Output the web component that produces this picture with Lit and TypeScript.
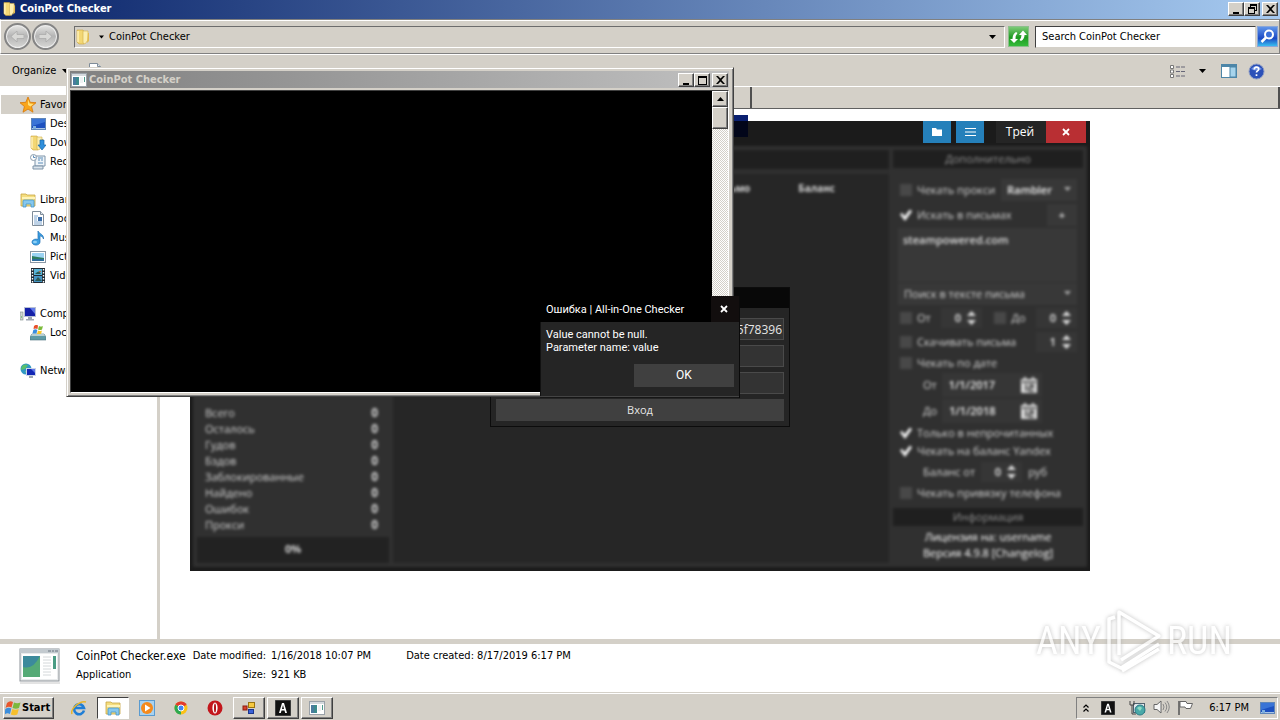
import { LitElement, html, css, svg } from "lit";
import { customElement, property } from "lit/decorators.js";

const icon = (w: number, h: number, body: unknown, vw = w, vh = h) =>
  html`<svg width=${w} height=${h} viewBox="0 0 ${vw} ${vh}" aria-hidden="true">${body}</svg>`;

const folder = svg`
  <path d="M1 1h6l1 2v12H3l-2-2z" fill="#f3d774" stroke="#c9a13c" stroke-width=".6"/>
  <path d="M7 2h5v9l-3 4-2-1z" fill="#fbeeb0" stroke="#d2ae4c" stroke-width=".6"/>
  <path d="M2 2v11" stroke="#fff3bd" stroke-width="1.4"/>
  <path d="M12 4h1v8l-2 2" fill="#e2bb50"/>`;
const appWindow = svg`
  <rect x=".5" y=".5" width="15" height="13" fill="#fff" stroke="#9aa1a8"/>
  <rect x="1" y="1" width="14" height="2" fill="#d5dade"/>
  <rect x="2" y="4" width="6" height="8" fill="#3c8a8c"/>
  <rect x="2" y="4" width="3" height="8" fill="#4a7c9e"/>
  <rect x="13" y="4" width="1" height="5" fill="#4e9c8c"/>
  <path d="M9 5h3M9 7h3M9 9h3" stroke="#e2e6e8"/>`;
const monitor = svg`
  <rect x="1" y="2" width="15" height="12" fill="#5f86b8"/>
  <rect x="2" y="3" width="13" height="9" fill="#1c50c0"/>
  <path d="M2 3h13v3L2 10z" fill="#3a74d6"/>
  <path d="M2 12.5h13" stroke="#a9c4e4"/><rect x="3" y="10" width="3" height="3" fill="#7dafdf"/>`;
const libraryFolder = svg`
  <path d="M1 2h5l1 1h8v11H1z" fill="#f4dd7e" stroke="#c8a644" stroke-width=".8"/>
  <path d="M2 6h13" stroke="#fff4b8" stroke-width="2"/>
  <path d="M3 15V9q0-1 1-1h9q1 0 1 1v6h-3v-3H6v3z" fill="#86c8ee" stroke="#4696c8" stroke-width=".8"/>`;
const icons: Record<string, unknown> = {
  star: svg`<path d="M8 0l2.200 5.300 5.800.4-4.400 3.800 1.400 5.700L8 12.100 3 15.200l1.400-5.700L0 5.700l5.800-.4z" fill="#f9a51b" stroke="#d87708" stroke-width=".8"/><path d="M8 2.500l1.600 4 4 .4-3.200 2.500L8 8z" fill="#ffe27a"/>`,
  desktop: monitor,
  downloads: svg`${folder}<path d="M10 5h4v5h2l-4 5-4-5h2z" fill="#2f8fdc" stroke="#1765a8" stroke-width=".7"/>`,
  recent: svg`<path d="M5 2h10v10H5z" fill="#eef4f9" stroke="#7c93a8"/><path d="M3 12h10v3H3z" fill="#dbe4ec" stroke="#7c93a8"/><circle cx="3.500" cy="3.500" r="3" fill="#fff" stroke="#8b9cab"/><path d="M3.500 1.500v2h2M8 4h5M8 6h2M11 6h2M8 9h5" stroke="#5b8cb8" fill="none"/>`,
  library: libraryFolder,
  document: svg`<path d="M2.500.5h8l3 3v11h-11z" fill="#fff" stroke="#7f8c99"/><path d="M10.500.5v3h3" fill="#dce4ec" stroke="#7f8c99"/><path d="M4 5h4M4 7h3M4 9h3M4 11h8M4 13h8" stroke="#7fa6cf"/><path d="M8 6h4v4H8z" fill="#3b6da8"/>`,
  music: svg`<path d="M8 1c1 3 6 3 5.500 8-.5-2-2-3-3.500-3.200V12a4 3 0 1 1-2-2.500z" fill="#3da0e2" stroke="#1b6fb4" stroke-width=".7"/><ellipse cx="5" cy="12" rx="2" ry="1.300" fill="#8fd0f5"/>`,
  picture: svg`<rect x=".5" y="2.500" width="15" height="11" fill="#fff" stroke="#8a97a4"/><rect x="2" y="4" width="12" height="8" fill="#9bd3f3"/><path d="M2 7q5 1 12 2v3H2z" fill="#2d7d60"/><path d="M2 10h12v2H2z" fill="#2c6c9c"/>`,
  video: svg`<rect x="1" y="0" width="14" height="15" fill="#1f2a33"/><rect x="4" y="1" width="8" height="6" fill="#58b3d6"/><rect x="4" y="8" width="8" height="6" fill="#4594c4"/><path d="M5 6q4-5 6 0zM5 13l3-4 4 4z" fill="#2c5a54"/><path d="M2.500 1v14M13.500 1v14" stroke="#fff" stroke-width="1.400" stroke-dasharray="1.500 1.500"/><path d="M9 3h2v1H9z" fill="#c8683c"/>`,
  computer: svg`<rect x="0" y="6" width="3" height="8" fill="#cfd6d2" stroke="#7c8a88" stroke-width=".6"/><path d="M1 11h1" stroke="#3cae3c"/><rect x="4" y="1" width="12" height="10" fill="#b6bfd4"/><rect x="5" y="2" width="10" height="8" fill="#1420a8"/><path d="M10 2h5v6z" fill="#5f78e8"/><path d="M8 11h4v2H8zM6 13h8v1.500H6z" fill="#9fa8b4"/>`,
  disk: svg`<path d="M2 9h12l2 3v3H0v-3z" fill="#5f9ba6" stroke="#4a717c" stroke-width=".6"/><path d="M2 9h12l1 2H1z" fill="#b9cfd2"/><path d="M4 1q2-2 4-.5L7.500 4q-2-1-4 0z" fill="#e8502a"/><path d="M9 1q2 1 4 0l-1 3.500q-2 1-4 0z" fill="#7cbb3a"/><path d="M3.300 5q2-1.500 4 0L6.500 8.500h-4z" fill="#3a8fe0"/><path d="M8 5.500q2 1 4 0L11 9H7z" fill="#f8c62c"/>`,
  network: svg`<circle cx="6" cy="6" r="5.500" fill="#3198c4"/><path d="M3 2q3-1 5 0L5 6 1 7q0-3 2-5z" fill="#59c06c"/><path d="M5 8l3 1-1 3z" fill="#7bd08a"/><rect x="6" y="5" width="10" height="8" fill="#cbd4e6"/><rect x="7" y="6" width="8" height="6" fill="#1226b4"/><path d="M11 6h4v4z" fill="#5f78e8"/><path d="M9 13h4v2H9z" fill="#9fa8b4"/>`,
};

const winFlag = svg`
  <path d="M2 3q3-3 6-1L6.500 7.500q-3-1.500-6 .5z" fill="#e8562c"/>
  <path d="M9 2.500q3 1.500 6.500 0L14 8q-3 1.500-6.500 0z" fill="#7cb83c"/>
  <path d="M.3 9q3-2 6-.5L5 14q-3-1.500-5.500.5z" fill="#3c8edc"/>
  <path d="M7.300 9q3 1.500 6.500 0l-1.500 5.500q-3 1.500-6.500 0z" fill="#f6bf2c"/>`;

const down = (cls = "") => html`<svg class=${cls} width="7" height="4" viewBox="0 0 7 4" aria-hidden="true"><path d="M0 0h7L3.500 4z" fill="currentColor"/></svg>`;

const base = css`
  *, *::before, *::after { box-sizing: border-box; }
  svg { display: block; flex: none; }
  button, input, select, textarea { font: inherit; color: inherit; margin: 0; padding: 0; border: 0; border-radius: 0; background: none; }
`;

const classicButton = css`
  .cap { display: grid; place-items: center; width: 16px; height: 14px; background: #d4d0c8; color: #000;
    border: 1px solid; border-color: #fff #404040 #404040 #fff; box-shadow: inset -1px -1px #808080; }
  .caps { display: flex; }
  .caps .cap:last-child { margin-left: 2px; }
`;

const capIcons: Record<string, unknown> = {
  Minimize: svg`<path d="M1 8h6v2H1z"/>`,
  Maximize: svg`<path d="M0 1h9v9H0zM1 3v6h7V3z" fill-rule="evenodd"/>`,
  Restore: svg`<path d="M2 0h7v7H7V6h1V2H3v1H2zM0 3h7v7H0zM1 5v4h5V5z" fill-rule="evenodd"/>`,
  Close: svg`<path d="M0 1h2l2.500 2.500L7 1h2L5.500 5 9 9H7L4.500 6.500 2 9H0l3.500-4z"/>`,
};

@customElement("caption-buttons")
class CaptionButtons extends LitElement {
  @property() middle = "Maximize";
  static styles = [base, classicButton];
  render() {
    return html`<div class="caps">${["Minimize", this.middle, "Close"].map(
      (n) => html`<button class="cap" aria-label=${n}>${icon(9, 10, capIcons[n])}</button>`)}</div>`;
  }
}

const groups = [
  [["star", "Favorites"], ["desktop", "Desktop"], ["downloads", "Downloads"], ["recent", "Recent Places"]],
  [["library", "Libraries"], ["document", "Documents"], ["music", "Music"], ["picture", "Pictures"], ["video", "Videos"]],
  [["computer", "Computer"], ["disk", "Local Disk (C:)"]],
  [["network", "Network"]],
];

@customElement("explorer-window")
class ExplorerWindow extends LitElement {
  static styles = [base, css`
    :host { display: flex; flex-direction: column; flex: 1; min-height: 0; background: #d4d0c8; }
    .title { display: flex; align-items: center; gap: 4px; height: 19px; padding: 0 2px 1px 3px; color: #fff; font-weight: bold;
      background: linear-gradient(90deg, #0a246a, #a6caf0); }
    .title span { flex: 1; }
    .nav { display: flex; align-items: center; height: 35px; padding: 0 1px 0 3px; border: 1px solid; border-color: #808080 #808080 #808080 #fff;
      box-shadow: inset 0 1px #fff; }
    .round { width: 27px; height: 27px; border-radius: 50%; border: 2px solid #858585; display: grid; place-items: center; margin-right: 1px;
      background: linear-gradient(#e8e8e6, #b4b4b4 48%, #d8d8d6); box-shadow: inset 0 0 0 1px #eee; }
    .address { display: flex; align-items: center; flex: 1; height: 22px; margin-left: 14px; padding: 0 8px 0 1px;
      border: 1px solid; border-color: #6c6c6c #fff #fff #6c6c6c; }
    .address span { flex: 1; padding-left: 5px; }
    .address .arr { width: 5px; margin-left: 9px; }
    .refresh { width: 21px; height: 21px; margin: 0 6px 0 3px; display: grid; place-items: center; border: 1px solid #8cbf8c; background: linear-gradient(#7cca76, #1f9a22 55%, #35bb3a); }
    .search { width: 221px; height: 22px; padding: 0 6px; background: #fff; border: 1px solid; border-color: #404040 #d4d0c8 #d4d0c8 #404040; }
    .search::placeholder { color: #000; opacity: 1; }
    .go { width: 21px; height: 21px; margin-left: 1px; display: grid; place-items: center; border: 1px solid #8aa6d8; background: linear-gradient(#5f94ea, #1b49c4 60%, #38bdf0); }
    .tools { display: flex; align-items: center; height: 32px; padding: 1px 15px 0 12px; border-top: 1px solid #fff; gap: 10px; }
    .tools button { display: flex; align-items: center; gap: 6px; }
    .tools .space { flex: 1; }
    .tools button span { padding-top: 4px; }
    .tools .open { margin-left: 8px; gap: 4px; }
    .tools .share { margin-left: 4px; }
    .tools .new { margin-left: 16px; }
    .tools .view { margin-right: 3px; }
    .body { display: flex; flex: 1; min-height: 0; background: #fff; }
    .side { width: 157px; padding-top: 9px; display: flex; flex-direction: column; gap: 19px; }
    .side a { display: flex; align-items: center; gap: 4px; height: 19px; padding-left: 30px; color: #000; text-decoration: none; white-space: nowrap; }
    .side a.head { padding-left: 20px; }
    .side a.on { background: #d4d0c8; margin-left: 1px; padding-left: 19px; }
    .split { width: 3px; background: #d4d0c8; }
    .main { flex: 1; }
    .cols { display: flex; height: 23px; background: #d4d0c8; border-top: 1px solid #fff; border-bottom: 1px solid #606060; }
    .cols i { flex: 1; border-right: 2px solid #505050; }
    .cols i:first-child { flex: none; width: 592px; }
    .details { display: grid; grid-template-columns: 52px max-content max-content max-content 1fr; align-content: center; column-gap: 5px; row-gap: 2px;
      height: 53px; padding: 1px 0 5px 19px; background: #fff; border-top: 5px solid #d4d0c8; line-height: 16px; }
    .details .big { grid-row: 1 / 3; }
    .name { font-size: 12px; padding-right: 2px; }
    .key { text-align: right; }
    .created { padding-left: 30px; }
  `];
  render() {
    return html`
      <header class="title">${icon(13, 16, folder, 14, 16)}<span>CoinPot Checker</span><caption-buttons middle="Restore"></caption-buttons></header>
      <nav class="nav">
        <button class="round" aria-label="Back">${icon(13, 11, svg`<path d="M6 0v3.500h7v4H6V11L0 5.500z" fill="#d8d8d6" stroke="#a8a8a8" stroke-width=".7"/>`)}</button>
        <button class="round" aria-label="Forward">${icon(13, 11, svg`<path d="M7 0v3.500H0v4h7V11l6-5.500z" fill="#d8d8d6" stroke="#a8a8a8" stroke-width=".7"/>`)}</button>
        <div class="address">${icon(14, 16, folder)}${down("arr")}<span>CoinPot Checker</span>${down()}</div>
        <button class="refresh" aria-label="Refresh">${icon(17, 15, svg`<path d="M0 5l4-4 4 4H5.500q0 4 2 6l-1.500 1Q2.500 10 2.500 5zM17 9l-4 4.500L9 9h2.500q0-3-2-5L11 3q3.500 2 3.500 6z" fill="#fff" transform="matrix(1 0 0 -1 0 15)"/>`)}</button>
        <input class="search" type="search" aria-label="Search" placeholder="Search CoinPot Checker">
        <button class="go" aria-label="Go">${icon(17, 17, svg`<circle cx="10" cy="6.500" r="4" fill="#3a6ed8" stroke="#fff" stroke-width="2"/><path d="M7 9.500L2.500 14" stroke="#fff" stroke-width="2.500"/>`)}</button>
      </nav>
      <div class="tools">
        <button>Organize ${down()}</button>
        <button class="open">${icon(14, 16, icons.document)}<span>Open</span></button>
        <button class="share"><span>Share with</span></button>
        <button class="new"><span>New folder</span></button>
        <span class="space"></span>
        <button class="view" aria-label="View">${icon(16, 13, svg`<path d="M.5.5h3v3h-3zM.5 5h3v3h-3zM.5 9.500h3v3h-3z" fill="#fff" stroke="#777"/><path d="M6 2h4M11 2h4M6 6.500h4M11 6.500h4M6 11h4M11 11h4" stroke="#667"/>`)}</button>
        <button aria-label="More">${down()}</button>
        <button aria-label="Preview pane">${icon(22, 14, svg`<rect x="5.500" y=".5" width="15" height="13" fill="#fff" stroke="#4d86a8"/><path d="M6 2h15" stroke="#4d86a8" stroke-width="2"/><rect x="14" y="3" width="6" height="10" fill="#a7d4ec" stroke="#4d86a8"/>`)}</button>
        <button aria-label="Help">${icon(17, 17, svg`<circle cx="8.500" cy="8.500" r="7.500" fill="#2b50b8" stroke="#8d9cc4"/><path d="M3 6q5-6 11 0-5 3-11 0z" fill="#6f92e2"/><path d="M6.300 6.500q0-2.300 2.200-2.300t2.200 1.900q0 1.300-1.300 1.900-.9.500-.9 1.500M8.500 11.300v1.800" fill="none" stroke="#fff" stroke-width="1.700"/>`)}</button>
      </div>
      <div class="body">
        <div class="side">${groups.map((g, n) => html`<div>${g.map(([i, t], k) =>
          html`<a href="#" class=${k ? "" : n ? "head" : "head on"}>${icon(16, 16, icons[i])}${t}</a>`)}</div>`)}</div>
        <div class="split"></div>
        <div class="main"><div class="cols"><i></i><i></i></div></div>
      </div>
      <footer class="details">
        <div class="big">${icon(42, 36, svg`<rect x="1" y="1" width="39" height="32" fill="#e9ebec" stroke="#8d9399"/><path d="M1 3h39" stroke="#c3cacf" stroke-width="4"/><path d="M29 3h3M33 3h2M36 3h3" stroke="#6a7480"/><rect x="3" y="6" width="35" height="25" fill="#fff"/><rect x="4" y="8" width="17" height="21" fill="#3c8a9c"/><path d="M4 29V19Q14 22 21 8v21z" fill="#55aa76"/><path d="M24 9h8M24 12h8M24 15h8M24 18h8M24 21h8M24 24h8M24 27h8" stroke="#d4d8da"/><rect x="34" y="8" width="3" height="13" fill="#4a9c84"/><path d="M1 35h40" stroke="#c8c8c8"/>`)}</div>
        <span class="name">CoinPot Checker.exe</span><span class="key">Date modified:</span><span>1/16/2018 10:07 PM</span><span class="created">Date created: 8/17/2019 6:17 PM</span>
        <span>Application</span><span class="key">Size:</span><span>921 KB</span>
      </footer>`;
  }
}

@customElement("console-window")
class ConsoleWindow extends LitElement {
  static styles = [base, classicButton, css`
    :host { display: flex; flex-direction: column; padding: 3px 4px 3px 3px; background: #d4d0c8; border: 1px solid; border-color: #d4d0c8 #404040 #404040 #d4d0c8;
      box-shadow: inset 1px 1px #fff, inset -1px -1px #808080; }
    .title { display: flex; align-items: center; gap: 2px; height: 17px; padding: 0 1px; color: #d4d0c8; font-weight: bold;
      background: linear-gradient(90deg, #808080, #c0c0c0); }
    .title span { flex: 1; }
    .view { flex: 1; display: flex; margin-top: 2px; border: 1px solid; border-color: #404040 #fff #fff #404040; }
    .screen { flex: 1; background: #000; }
    .bar { width: 16px; background: repeating-conic-gradient(#d4d0c8 0 25%, #fff 0 50%) 0 0 / 2px 2px; }
    .bar .cap { height: 16px; }
    .bar .thumb { height: 22px; }
  `];
  render() {
    return html`
      <header class="title">${icon(16, 14, appWindow)}<span>CoinPot Checker</span><caption-buttons></caption-buttons></header>
      <div class="view"><div class="screen"></div>
        <div class="bar"><button class="cap" aria-label="Scroll up">${icon(7, 4, svg`<path d="M0 4h7L3.500 0z"/>`)}</button><div class="cap thumb"></div></div>
      </div>`;
  }
}

const stats = ["Всего", "Осталось", "Гудов", "Бэдов", "Заблокированные", "Найдено", "Ошибок", "Прокси"];

@customElement("checker-window")
class CheckerWindow extends LitElement {
  static styles = [base, css`
    :host { display: flex; flex-direction: column; background: #1b1b1b; color: #d2d2d2; font: 11px/16px "Open Sans", "Noto Sans", sans-serif; }
    .title { display: flex; justify-content: flex-end; height: 22px; padding-right: 4px; }
    .title button { display: grid; place-items: center; }
    .blue { width: 28px; margin-right: 5px; background: #2580ba; }
    .tray { width: 50px; margin-left: 7px; padding-right: 2px; background: #252525; color: #fff; font-size: 12px; }
    .title .close { width: 40px; background: #b92f33; }
    .body { flex: 1; display: flex; gap: 4px; margin: 3px 3px 4px; padding: 4px; background: #303030; filter: blur(1.4px); }
    .left { width: 192px; display: flex; flex-direction: column; justify-content: flex-end; }
    .stats { margin: 0; padding: 0 11px 4px 8px; }
    .stats div { display: flex; justify-content: space-between; }
    .stats dd { margin: 0; font-weight: bold; font-size: 12px; }
    .percent { height: 26px; background: #222; text-align: center; font-weight: bold; line-height: 24px; }
    .mid { flex: 1; background: #262626; }
    .mid .band { height: 24px; background: #1f1f1f; border-bottom: 5px solid #2f2f2f; }
    .mid .heads { display: flex; justify-content: flex-end; gap: 48px; padding: 6px 54px 0 0; font-weight: bold; font-size: 10px; }
    .right { width: 190px; }
    .bar { height: 18px; background: #1f1f1f; text-align: center; color: #909090; line-height: 18px; }
    .form { padding: 10px 6px 6px 5px; }
    .row { display: flex; align-items: center; height: 24px; gap: 6px; }
    .row.s { height: 18px; }
    .row.t { height: 26px; }
    .row.in { padding-left: 25px; }
    .row.pair { gap: 0; justify-content: space-between; }
    .row label { display: flex; align-items: center; gap: 5px; white-space: nowrap; }
    .row .grow { flex: 1; }
    input[type="checkbox"] { appearance: none; width: 12px; height: 12px; margin-left: 2px; background: #484848; }
    input[type="checkbox"]:checked { background: #f4f4f4; clip-path: polygon(0 45%, 18% 32%, 38% 60%, 82% 5%, 100% 18%, 42% 100%); }
    .drop { position: relative; display: flex; background: #383838; }
    .drop svg { position: absolute; right: 6px; top: 8px; color: #aaa; }
    select { appearance: none; height: 22px; padding: 0 6px; width: 100%; }
    .row .host { width: 76px; color: #eee; font-weight: 600; margin-left: -10px; }
    .wide { width: 100%; }
    textarea { display: block; width: 100%; height: 54px; padding: 4px 5px; background: #383838; resize: none; color: #ddd; font-weight: 600; }
    .plus { width: 30px; height: 22px; background: #383838; font-weight: bold; }
    .num { display: flex; align-items: center; gap: 6px; background: #363636; height: 20px; padding-right: 6px; color: #eee; font-weight: 600; }
    .num input { width: 20px; text-align: right; }
    .date { display: flex; align-items: center; background: #363636; height: 24px; width: 100px; padding: 0 5px 0 7px; color: #eee; font-weight: 600; }
    .date input { flex: 1; min-width: 0; }
    .info { text-align: center; padding-top: 3px; color: #fff; }
    .info a { color: inherit; text-decoration: none; }
  `];
  check(text: string, on = false) {
    return html`<label><input type="checkbox" ?checked=${on}>${text}</label>`;
  }
  num(label: string, v: string) {
    return html`<span class="num"><input aria-label=${label} value=${v}>${icon(9, 14, svg`<path d="M0 5h9L4.500 0zM0 9h9l-4.500 5z" fill="#ddd"/>`)}</span>`;
  }
  date(label: string, v: string) {
    return html`<label>${label}<span class="date"><input value=${v}>${icon(16, 16, svg`<path d="M0 2h16v14H0zM3 0h2v3H3zM11 0h2v3h-2z" fill="#ddd"/><path d="M1 5h14M5 7v7M8 8h4v2.500H8V14h5" stroke="#333" stroke-width="1.500" fill="none"/>`)}</span></label>`;
  }
  render() {
    return html`
      <header class="title">
        <button class="blue" aria-label="Папка">${icon(10, 8, svg`<path d="M0 0h4l1 1.500h5V8H0z" fill="#fff"/>`)}</button>
        <button class="blue" aria-label="Меню">${icon(11, 8, svg`<path d="M0 .5h11M0 4h11M0 7.500h11" stroke="#fff"/>`)}</button>
        <button class="tray">Трей</button>
        <button class="close" aria-label="Закрыть">${icon(8, 8, svg`<path d="M1 1l6 6M7 1L1 7" stroke="#fff" stroke-width="1.800"/>`)}</button>
      </header>
      <div class="body">
        <section class="left">
          <dl class="stats">${stats.map((s) => html`<div><dt>${s}</dt><dd>0</dd></div>`)}</dl>
          <div class="percent">0%</div>
        </section>
        <section class="mid"><div class="band"></div><div class="heads"><span>Письмо</span><span>Баланс</span></div></section>
        <section class="right">
          <div class="bar">Дополнительно</div>
          <div class="form">
            <div class="row">${this.check("Чекать прокси")}<span class="grow"></span><span class="drop host"><select aria-label="Хост"><option>Rambler</option></select>${down()}</span></div>
            <div class="row t">${this.check("Искать в письмах", true)}<span class="grow"></span><button class="plus">+</button></div>
            <textarea aria-label="Запросы">steampowered.com</textarea>
            <div class="row"><span class="drop wide"><select aria-label="Режим"><option>Поиск в тексте письма</option></select>${down()}</span></div>
            <div class="row pair">${this.check("От")}${this.num("От", "0")}${this.check("До")}${this.num("До", "0")}</div>
            <div class="row">${this.check("Скачивать письма")}<span class="grow"></span>${this.num("Письма", "1")}</div>
            <div class="row s">${this.check("Чекать по дате")}</div>
            <div class="row t in">${this.date("От", "1/1/2017")}</div>
            <div class="row t in">${this.date("До", "1/1/2018")}</div>
            <div class="row s">${this.check("Только в непрочитанных", true)}</div>
            <div class="row s">${this.check("Чекать на баланс Yandex", true)}</div>
            <div class="row in">Баланс от ${this.num("Баланс от", "0")} руб</div>
            <div class="row s">${this.check("Чекать привязку телефона")}</div>
          </div>
          <div class="bar">Информация</div>
          <div class="info">Лицензия на: username<br>Версия 4.9.8 <a href="#">[Changelog]</a></div>
        </section>
      </div>`;
  }
}

@customElement("login-dialog")
class LoginDialog extends LitElement {
  static styles = [base, css`
    :host { display: block; background: #252525; border: 1px solid #0c0c0c; color: #e6e6e6; font: 12px/16px "Open Sans", "Noto Sans", sans-serif; }
    .title { height: 20px; background: #080808; }
    form { display: flex; flex-direction: column; gap: 5px; padding: 10px 5px 5px; }
    input { height: 22px; padding: 0 1px; text-align: right; background: #333; border: 1px solid #4a4a4a; }
    button { height: 22px; background: #404040; font-size: 11px; }
  `];
  render() {
    return html`<div class="title"></div>
      <form>
        <input aria-label="HWID" value="5f78396"><input aria-label="Логин"><input aria-label="Пароль" type="password">
        <button type="button">Вход</button>
      </form>`;
  }
}

@customElement("error-dialog")
class ErrorDialog extends LitElement {
  static styles = [base, css`
    :host { display: block; background: #252525; border-right: 1px solid #0a0a0a; color: #fff; font: 11px/13px Roboto, "Open Sans", sans-serif; }
    .title { display: flex; align-items: center; justify-content: space-between; height: 26px; padding-left: 6px; background: #000; }
    .close { display: grid; place-items: center; width: 28px; height: 26px; padding-right: 3px; background: #120e0e; }
    .body { padding: 6px 5px 9px; border-left: 1px solid #111; }
    p { margin: 0 0 10px; }
    .ok { display: block; width: 100px; height: 23px; margin-left: auto; background: #404040; font-size: 12px; }
    .foot { height: 2px; border-top: 1px solid #444; background: #161616; }
  `];
  render() {
    return html`
      <div class="title"><span>Ошибка | All-in-One Checker</span>
        <button class="close" aria-label="Закрыть">${icon(8, 8, svg`<path d="M1 1l6 6M7 1L1 7" stroke="#fff" stroke-width="1.800"/>`)}</button></div>
      <div class="body"><p>Value cannot be null.<br>Parameter name: value</p><button class="ok">OK</button></div>
      <div class="foot"></div>`;
  }
}

@customElement("task-bar")
class TaskBar extends LitElement {
  static styles = [base, css`
    :host { display: flex; align-items: center; height: 28px; padding: 2px 2px 0 3px; background: #d4d0c8; border-top: 1px solid #d4d0c8; box-shadow: inset 0 1px #fff; }
    button { display: grid; place-items: center; width: 32px; height: 22px; }
    .start { display: flex; align-items: center; gap: 1px; width: 51px; padding-left: 1px; font-weight: bold; margin-right: 9px; }
    .up { border: 1px solid; border-color: #fff #404040 #404040 #fff; box-shadow: inset -1px -1px #808080; }
    .down { border: 1px solid; border-color: #404040 #fff #fff #404040; background: #fff; }
    .quick { display: flex; gap: 2px; margin-right: 2px; }
    .open { display: flex; gap: 2px; }
    .tray { display: flex; align-items: center; height: 22px; margin-left: auto; padding: 0 2px 0 6px; border: 1px solid; border-color: #808080 #fff #fff #808080; }
    .more { margin-right: 12px; }
    .lang { margin-right: 14px; }
    .mid { display: flex; gap: 7px; margin-right: 15px; }
    time { margin-right: 10px; }
  `];
  letterA(s: number) {
    return icon(s, s, svg`<rect width="16" height="16" fill="#111" stroke="#666"/><path d="M4 13L7 3h2l3 10h-1.800l-.7-2.500h-3L5.800 13zM7 9h2L8 5z" fill="#fff"/>`, 16, 16);
  }
  render() {
    return html`
      <button class="start up">${icon(16, 16, winFlag)}Start</button>
      <div class="quick">
        <button aria-label="Internet Explorer">${icon(16, 16, svg`<path d="M13 10.500A5 5 0 1 1 13 8H4.500" fill="none" stroke="#1f7ed6" stroke-width="2.600"/><path d="M1 14C-1 9 9 0 15 2" fill="none" stroke="#e8b52c" stroke-width="1.500"/>`)}</button>
        <button class="down" aria-label="Explorer">${icon(17, 16, libraryFolder)}</button>
        <button aria-label="Media Player">${icon(16, 16, svg`<rect x=".5" y=".5" width="15" height="15" fill="#a8d2f0" stroke="#5a9bd0"/><circle cx="8" cy="8" r="6" fill="#f58a1c"/><path d="M6 4.500v7L11.500 8z" fill="#fff"/>`)}</button>
        <button aria-label="Chrome">${icon(16, 16, svg`<circle cx="8" cy="8" r="6.500" fill="#fbc116"/><path d="M8 8L2.400 4.700A6.500 6.500 0 0 1 13.600 4.700z" fill="#e33b2e"/><path d="M8 8L2.400 4.700A6.500 6.500 0 0 0 8 14.500z" fill="#2da94f"/><circle cx="8" cy="8" r="3" fill="#4285f4" stroke="#fff"/>`)}</button>
        <button aria-label="Opera">${icon(16, 16, svg`<circle cx="8" cy="8" r="7.500" fill="#c3161c"/><ellipse cx="8" cy="8" rx="2.600" ry="5.500" fill="#fff"/><ellipse cx="8" cy="8" rx="1" ry="4.500" fill="#b01016"/>`)}</button>
      </div>
      <div class="open">
        <button class="up" aria-label="Forms">${icon(14, 14, svg`<rect x="6.500" y="1.500" width="6" height="5" fill="#f6c940" stroke="#9a7410"/><rect x="1" y="5" width="4" height="4" fill="#d8402c" stroke="#8c1c10"/><rect x="6.500" y="8.500" width="5" height="4" fill="#3b62d8" stroke="#1b368c"/>`)}</button>
        <button class="up" aria-label="All-in-One Checker">${this.letterA(16)}</button>
        <button class="up" aria-label="Console">${icon(16, 14, appWindow)}</button>
      </div>
      <div class="tray">
        <span class="more">${icon(6, 8, svg`<path d="M.5 3.500L3 1l2.500 2.500M.5 7.500L3 5l2.500 2.500" fill="none" stroke="#000" stroke-width="1.200"/>`)}</span>
        <span class="lang">${this.letterA(14)}</span>
        <span class="mid">
          ${icon(17, 16, svg`<rect x="4.500" y="3.500" width="11" height="9" fill="#dfe6ea" stroke="#50616e"/><path d="M1 1v4h4V1M3 5v9h4" fill="none" stroke="#444"/><circle cx="11" cy="10" r="5" fill="#4aa9a8" stroke="#2c7c86"/><path d="M8 8q3-3 5 0l-2 3z" fill="#8edcc4"/>`)}
          ${icon(17, 14, svg`<path d="M1 4.500h3L8 1v12L4 9.500H1z" fill="#f5f5f5" stroke="#666"/><path d="M10 4q2 3 0 6M12 2.500q3.500 4.500 0 9M14 1q4.500 6 0 12" fill="none" stroke="#888"/>`)}
          ${icon(17, 15, svg`<path d="M2 1v14" stroke="#555" stroke-width="1.500"/><path d="M3 1.500h6l1 2h5.500l-2 5H9l-1-1.500H3z" fill="#fff" stroke="#666"/>`)}
        </span>
        <time>6:17 PM</time>
        ${icon(16, 16, monitor)}
      </div>`;
  }
}

@customElement("app-root")
class AppRoot extends LitElement {
  static styles = [base, css`
    :host { display: flex; flex-direction: column; position: relative; height: 100vh; overflow: hidden; color: #000;
      font: 11px/14px "DejaVu Sans Condensed", "Noto Sans", sans-serif; }
    .win { position: absolute; }
    .ghost { left: 734px; top: 115px; width: 14px; height: 22px; background: linear-gradient(#0a2070 6px, #02061a 6px); }
    .checker { left: 190px; top: 121px; width: 900px; height: 450px; }
    .login { left: 490px; top: 287px; width: 300px; }
    .console { left: 66px; top: 67px; width: 668px; height: 330px; }
    .error { left: 540px; top: 296px; width: 200px; }
    .mark { right: 48px; bottom: 47px; display: flex; align-items: center; gap: 4px; opacity: .75; color: #fff; pointer-events: none;
      font: 400 38px/64px "Roboto Condensed", Roboto, sans-serif; filter: drop-shadow(0 0 2px #aaa); }
  `];
  render() {
    return html`
      <explorer-window></explorer-window>
      <task-bar></task-bar>
      <checker-window class="win checker"></checker-window>
      <div class="win ghost"></div>
      <login-dialog class="win login"></login-dialog>
      <console-window class="win console"></console-window>
      <error-dialog class="win error"></error-dialog>
      <div class="win mark"><span>ANY</span>${icon(58, 64, svg`<path d="M14 46V3L54 27 16 51M10 8L4 10v43l12 6 38-24M17 62l37-22" fill="none" stroke="#fff" stroke-width="3.500" stroke-linejoin="round"/>`)}<span>RUN</span></div>`;
  }
}
